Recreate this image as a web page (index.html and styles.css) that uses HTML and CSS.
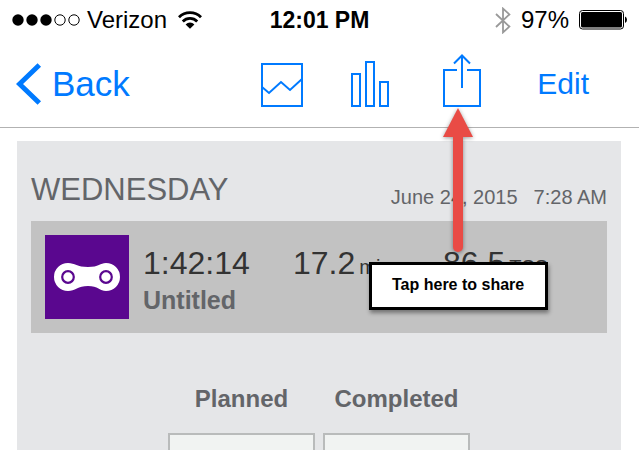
FILE: index.html
```html
<!DOCTYPE html>
<html lang="en">
<head>
<meta charset="utf-8">
<meta name="viewport" content="width=device-width, initial-scale=1">
<title>Workout</title>
<link rel="stylesheet" href="styles.css">
</head>
<body>
<header class="status">
  <div class="status-left">
    <svg class="signal" width="68" height="12" viewBox="0 0 68 12" aria-hidden="true">
      <g fill="#000"><circle cx="6" cy="6" r="5.7"/><circle cx="20" cy="6" r="5.7"/><circle cx="34" cy="6" r="5.7"/></g>
      <g fill="none" stroke="#000"><circle cx="48" cy="6" r="5.2"/><circle cx="62" cy="6" r="5.2"/></g>
    </svg>
    <span>Verizon</span>
    <svg class="wifi" width="24" height="18" viewBox="0 0 24 18" aria-hidden="true">
      <g fill="none" stroke="#000" stroke-width="2.8">
        <path d="M1 6.2a15.6 15.6 0 0 1 22 0"/>
        <path d="M4.8 10.4a10.2 10.2 0 0 1 14.4 0"/>
      </g>
      <path d="M7.6 13.4a6.2 6.2 0 0 1 8.8 0L12 17.8z"/>
    </svg>
  </div>
  <time class="clock">12:01 PM</time>
  <div class="status-right">
    <svg width="16" height="27" viewBox="0 0 16 27" aria-hidden="true">
      <path d="M1 7l13.4 12.6L8 25.4V1.6l6.4 5.8L1 20" fill="none" stroke="#999" stroke-width="1.8"/>
    </svg>
    <span>97%</span>
    <svg class="battery" width="48" height="20" viewBox="0 0 48 20" aria-hidden="true">
      <rect x=".5" y=".5" width="44" height="18.5" rx="3" fill="none" stroke="#000"/>
      <rect x="2" y="2" width="41" height="15.5" rx="1.5"/>
      <path d="M46 6.5q2 1 2 3.2t-2 3.3z"/>
    </svg>
  </div>
</header>

<nav class="nav">
  <a class="back" href="#">
    <svg width="26" height="42" viewBox="0 0 26 42" aria-hidden="true"><path d="M23.3 2L3.5 21l19.8 19" fill="none" stroke="currentColor" stroke-width="5"/></svg>
    <span>Back</span>
  </a>
  <div class="tools">
    <button type="button" aria-label="Graph">
      <svg width="42" height="44" viewBox="0 0 42 44"><g fill="none" stroke="currentColor" stroke-width="2"><path d="M1 1h40v42H1z"/><path d="M1 24l7 6 12-11 9 8 12-11"/></g></svg>
    </button>
    <button type="button" aria-label="Charts">
      <svg width="38" height="46" viewBox="0 0 38 46"><path d="M1 13h8v32H1zM15 1h8v44h-8zM29 21h8v24h-8z" fill="none" stroke="currentColor" stroke-width="2"/></svg>
    </button>
    <button type="button" class="share" aria-label="Share">
      <svg width="38" height="53" viewBox="0 0 38 53"><path d="M14 16H1v36h36V16H24M19 34V2M11 9.5L19 1.5l8 8" fill="none" stroke="currentColor" stroke-width="2"/></svg>
    </button>
    <button type="button" class="edit">Edit</button>
  </div>
</nav>

<main class="panel">
  <div class="heading">
    <h1>WEDNESDAY</h1>
    <p class="when"><time>June 24, 2015</time><time>7:28 AM</time></p>
  </div>
  <section class="workout">
    <svg class="sport" width="84" height="84" viewBox="0 0 84 84" aria-hidden="true">
      <rect width="84" height="84" fill="#5a078f"/>
      <path d="M23 28c7 0 9 4 20 4s12-4 18-4a14 14 0 0 1 0 28c-6 0-8-5-18-5s-13 5-20 5a14 14 0 0 1 0-28z" fill="#fff"/>
      <g fill="none" stroke="#5a078f" stroke-width="2.2"><circle cx="23" cy="42" r="5.8"/><circle cx="61" cy="42" r="5.8"/></g>
    </svg>
    <div class="stat">
      <p class="value">1:42:14</p>
      <p class="name">Untitled</p>
    </div>
    <p class="stat value">17.2<span class="unit">mi</span></p>
    <p class="stat value">86.5<span class="unit">TSS</span></p>
  </section>
  <table class="results">
    <thead>
      <tr><th scope="col" id="planned">Planned</th><th scope="col" id="completed">Completed</th></tr>
    </thead>
    <tbody>
      <tr><td><input type="text" aria-labelledby="planned"></td><td><input type="text" aria-labelledby="completed"></td></tr>
    </tbody>
  </table>
</main>

<svg class="arrow" width="40" height="152" viewBox="0 0 40 152" aria-hidden="true">
  <g fill="#e94b45"><path d="M20 4l15 29H5z"/><path d="M15 30h10v113a5 5 0 0 1-10 0z"/></g>
</svg>
<div class="callout" role="note">Tap here to share</div>
</body>
</html>
```
FILE: styles.css
```css
* {
  box-sizing: border-box;
}

body {
  position: relative;
  display: flex;
  flex-direction: column;
  height: 100vh;
  margin: 0;
  overflow: hidden;
  background: #fff;
  color: #000;
  font-family: "Liberation Sans", Arial, sans-serif;
}

h1,
p {
  margin: 0;
  font-weight: normal;
}

svg {
  display: block;
  flex: none;
}

button {
  padding: 0;
  border: 0;
  background: none;
  color: inherit;
  font: inherit;
}

.status {
  display: grid;
  grid-template-columns: 1fr auto 1fr;
  align-items: center;
  flex: none;
  height: 40px;
  padding: 0 12px;
  font-size: 24px;
  line-height: 40px;
}

.status-left,
.status-right {
  display: flex;
  align-items: center;
  gap: 7px;
}

.wifi {
  margin-left: 4px;
}

.clock {
  font-size: 23px;
  font-weight: bold;
}

.status-right {
  justify-content: flex-end;
  gap: 10px;
}

.nav {
  display: flex;
  align-items: center;
  justify-content: space-between;
  flex: none;
  height: 88px;
  padding: 0 50px 0 16px;
  border-bottom: 1px solid #b2b2b2;
  color: #007aff;
}

.back {
  display: flex;
  align-items: center;
  gap: 10px;
  color: inherit;
  font-size: 35px;
  text-decoration: none;
}

.tools {
  display: flex;
  align-items: flex-end;
  gap: 48px;
  padding-bottom: 6px;
}

.tools .share {
  margin: 0 8px 0 6px;
}

.tools .edit {
  align-self: center;
  margin-top: 6px;
  font-size: 30px;
  line-height: 36px;
}

.panel {
  flex: 1 0 auto;
  margin: 13px 18px 0 17px;
  padding: 31px 14px 14px;
  background: #e5e6e8;
  color: #636569;
}

.heading {
  display: flex;
  align-items: flex-end;
  justify-content: space-between;
  padding-bottom: 13px;
}

.heading h1 {
  font-size: 31px;
  line-height: 36px;
}

.when {
  display: flex;
  gap: 16px;
  font-size: 20px;
  line-height: 22px;
}

.workout {
  display: grid;
  grid-template-columns: 84px 136px 136px 1fr;
  column-gap: 14px;
  padding: 14px;
  background: #c2c2c2;
}

.stat {
  padding-top: 10px;
  white-space: nowrap;
}

.value {
  color: #333;
  font-size: 32px;
  line-height: 36px;
}

.unit {
  margin-left: 4px;
  font-size: 20px;
}

.name {
  font-size: 25px;
  font-weight: bold;
  line-height: 38px;
}

.results {
  width: 318px;
  margin: 52px auto 0;
  border-spacing: 8px 0;
  table-layout: fixed;
}

.results th {
  padding: 0 0 20px;
  font-size: 24px;
  line-height: 28px;
}

.results td {
  padding: 0;
}

.results input {
  display: block;
  width: 100%;
  height: 56px;
  border: 2px solid #b9bbbb;
  background: #f1f3f2;
  font-size: 24px;
}

.arrow {
  position: absolute;
  top: 104px;
  left: 438px;
  filter: drop-shadow(0 1px 2px rgba(0, 0, 0, 0.4));
}

.callout {
  position: absolute;
  top: 262px;
  left: 369px;
  padding: 11px 21px 13px 20px;
  border: 3px solid #000;
  background: #fff;
  box-shadow: 1px 3px 4px rgba(0, 0, 0, 0.4);
  font-size: 16px;
  font-weight: bold;
  line-height: 18px;
}
```
